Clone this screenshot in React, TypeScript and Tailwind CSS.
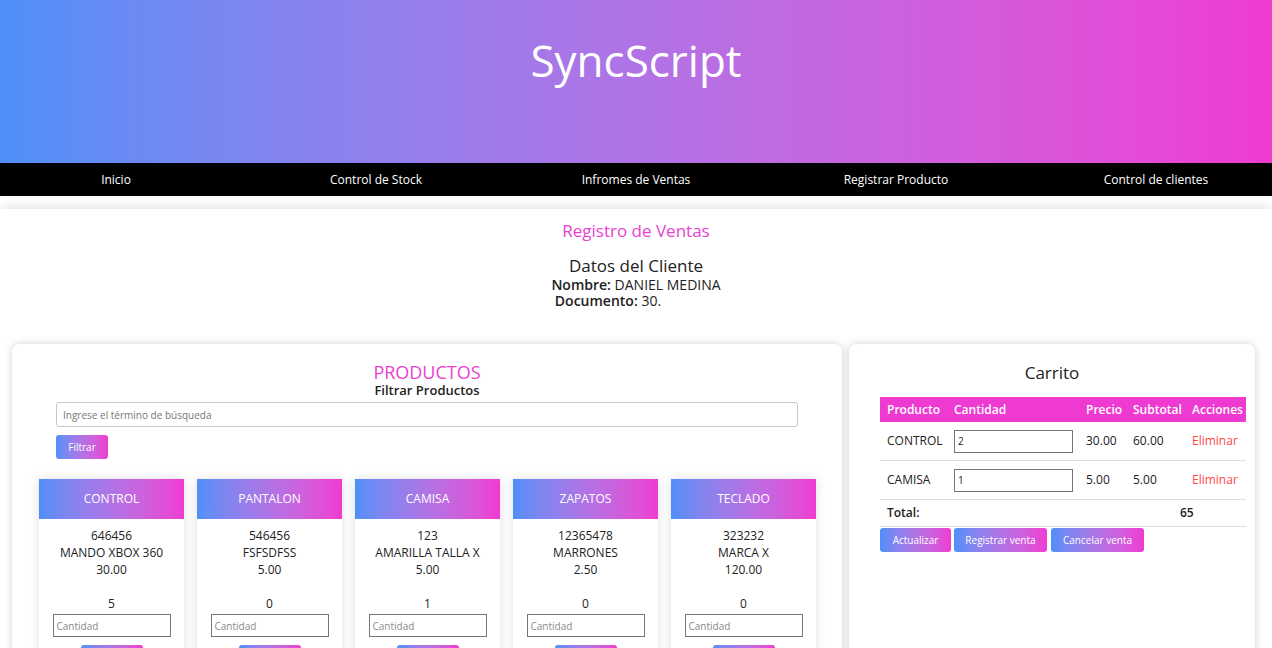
import { ReactNode } from "react";

const grad = "bg-gradient-to-r from-[#4f8ff8] to-[#ef3ad2]";

const navItems = [
  "Inicio",
  "Control de Stock",
  "Infromes de Ventas",
  "Registrar Producto",
  "Control de clientes",
];

const products = [
  { name: "CONTROL", code: "646456", desc: "MANDO XBOX 360", price: "30.00", stock: 5 },
  { name: "PANTALON", code: "546456", desc: "FSFSDFSS", price: "5.00", stock: 0 },
  { name: "CAMISA", code: "123", desc: "AMARILLA TALLA X", price: "5.00", stock: 1 },
  { name: "ZAPATOS", code: "12365478", desc: "MARRONES", price: "2.50", stock: 0 },
  { name: "TECLADO", code: "323232", desc: "MARCA X", price: "120.00", stock: 0 },
];

const cart = [
  { name: "CONTROL", qty: "2", price: "30.00", subtotal: "60.00" },
  { name: "CAMISA", qty: "1", price: "5.00", subtotal: "5.00" },
];

const cols = "grid grid-cols-[67px_132px_47px_59px_61px] items-center";

function GradButton({ children, className }: { children: ReactNode; className?: string }) {
  return (
    <button
      className={`${grad} h-[24px] rounded-[3px] text-[10px] text-white ${className ?? ""}`}
    >
      {children}
    </button>
  );
}

function ProductCard({ p }: { p: (typeof products)[number] }) {
  return (
    <div className="w-[145px] shrink-0 bg-white shadow-[0_0_10px_rgba(0,0,0,0.13)]">
      <div className={`${grad} flex h-[40px] items-center justify-center text-[12px] text-white`}>
        {p.name}
      </div>
      <div className="flex flex-col items-center pt-[8px] text-[12px] leading-[17px] text-[#222]">
        <p>{p.code}</p>
        <p>{p.desc}</p>
        <p>{p.price}</p>
        <p>&nbsp;</p>
        <p>{p.stock}</p>
        <input
          placeholder="Cantidad"
          className="mt-[2px] h-[23px] w-[118px] border border-[#777] px-[3px] text-[10px] placeholder:text-[#8a8a8a] outline-none"
        />
        <GradButton className="mt-[8px] w-[62px]">Agregar</GradButton>
      </div>
    </div>
  );
}

export default function App() {
  return (
    <div className="min-h-screen overflow-hidden bg-white font-['Open_Sans','DejaVu_Sans',sans-serif] text-[#222]">
      <header className={`${grad} h-[163px] pt-[33px] text-center`}>
        <h1 className="text-[44px] leading-[54px] font-medium text-white">SyncScript</h1>
      </header>

      <nav className="flex h-[33px] items-center justify-center bg-black">
        {navItems.map((item) => (
          <a key={item} className="w-[260px] shrink-0 text-center text-[12px] text-white">
            {item}
          </a>
        ))}
      </nav>

      <main className="mt-[13px] bg-white shadow-[0_0_12px_rgba(0,0,0,0.15)]">
        <h2 className="pt-[10px] text-center text-[17px] leading-[24px] text-[#ea3fd0]">
          Registro de Ventas
        </h2>

        <div className="mt-[12px] text-center">
          <h3 className="text-[17px] leading-[22px] font-medium">Datos del Cliente</h3>
          <p className="text-[14px] leading-[16px]">
            <span className="font-semibold">Nombre:</span> DANIEL MEDINA
          </p>
          <p className="text-[14px] leading-[16px]">
            <span className="font-semibold">Documento:</span> 30.
            <span className="text-white">1234567</span>
          </p>
        </div>

        <div className="mt-[35px] flex h-[320px] gap-[7px] pl-[12px]">
          {/* productos */}
          <section className="w-[830px] shrink-0 rounded-lg bg-white pt-[18px] shadow-[0_0_8px_rgba(0,0,0,0.18)]">
            <h2 className="text-center text-[18px] leading-[21px] text-[#ea3fd0]">PRODUCTOS</h2>
            <h3 className="text-center text-[13px] leading-[15px] font-semibold">Filtrar Productos</h3>
            <div className="px-[44px]">
              <input
                placeholder="Ingrese el término de búsqueda"
                className="mt-[4px] h-[25px] w-full rounded-[3px] border border-[#c8c8c8] px-[6px] text-[10px] placeholder:text-[#777] outline-none"
              />
              <GradButton className="mt-[8px] w-[52px]">Filtrar</GradButton>
            </div>
            <div className="mt-[20px] flex gap-[13px] px-[27px]">
              {products.map((p) => (
                <ProductCard key={p.name} p={p} />
              ))}
            </div>
          </section>

          {/* carrito */}
          <section className="w-[406px] shrink-0 rounded-lg bg-white pt-[18px] shadow-[0_0_8px_rgba(0,0,0,0.18)]">
            <h2 className="text-center text-[17px] leading-[22px] font-medium">Carrito</h2>
            <div className="mt-[13px] ml-[31px] w-[366px] text-[12px]">
              <div className={`${cols} h-[25px] bg-[#ef3ad2] font-semibold text-white`}>
                <span className="pl-[7px]">Producto</span>
                <span className="pl-[7px]">Cantidad</span>
                <span className="pl-[7px]">Precio</span>
                <span className="pl-[7px]">Subtotal</span>
                <span className="pl-[7px]">Acciones</span>
              </div>
              {cart.map((c) => (
                <div key={c.name} className={`${cols} h-[39px] border-b border-[#ddd]`}>
                  <span className="pl-[7px]">{c.name}</span>
                  <span className="pl-[7px]">
                    <input
                      defaultValue={c.qty}
                      className="h-[23px] w-[119px] border border-[#777] px-[3px] text-[10px] outline-none"
                    />
                  </span>
                  <span className="pl-[7px]">{c.price}</span>
                  <span className="pl-[7px]">{c.subtotal}</span>
                  <span className="pl-[7px] text-[#ff4747]">Eliminar</span>
                </div>
              ))}
              <div className="flex h-[27px] items-center border-b border-[#ddd] font-semibold">
                <span className="w-[300px] pl-[7px]">Total:</span>
                <span>65</span>
              </div>
              <div className="mt-[1px] flex gap-[3px]">
                <GradButton className="w-[71px]">Actualizar</GradButton>
                <GradButton className="w-[93px]">Registrar venta</GradButton>
                <GradButton className="ml-[1px] w-[93px]">Cancelar venta</GradButton>
              </div>
            </div>
          </section>
        </div>
      </main>
    </div>
  );
}
